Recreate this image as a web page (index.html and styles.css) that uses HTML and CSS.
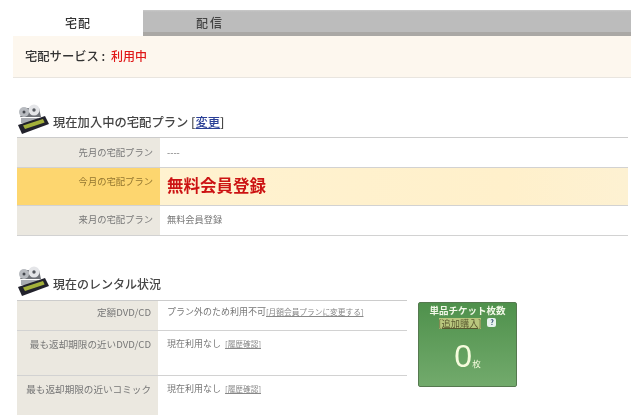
FILE: index.html
```html
<!DOCTYPE html>
<html lang="ja">
<head>
<meta charset="utf-8">
<title>宅配</title>
<link rel="stylesheet" href="styles.css">
</head>
<body>
<svg class="defs" width="0" height="0">
  <defs>
    <g id="filmicon">
      <path d="M3 13 8 4h14l2 9z" fill="#6f7278"/>
      <circle cx="7" cy="8" r="5" fill="#b8bbc0"/>
      <circle cx="17" cy="6" r="5.5" fill="#e4e5e8"/>
      <circle cx="17" cy="6" r="1.7" fill="#55585e"/>
      <circle cx="7" cy="8" r="1.5" fill="#44474d"/>
      <path d="M4 14h17v5H4z" fill="#a8abb1"/>
      <path d="M1 21 28 12l4 8L5 30z" fill="#22222c"/>
      <path d="M6 21.5 26 15l1.6 3.5L8 25z" fill="#a3b03a"/>
    </g>
  </defs>
</svg>
<div class="page">
  <div class="tabs">
    <div class="tab tab-on">宅配</div>
    <div class="tab tab-off">配信</div>
  </div>
  <div class="notice">宅配サービス : <span class="red">利用中</span></div>

  <div class="head head-plan">
    <svg class="film" viewBox="0 0 36 30"><use href="#filmicon"/></svg>
    <span class="head-text">現在加入中の宅配プラン [<a class="link-blue">変更</a>]</span>
  </div>
  <div class="plan">
    <div class="row r30">
      <div class="th">先月の宅配プラン</div><div class="td">----</div>
    </div>
    <div class="row row-now">
      <div class="th">今月の宅配プラン</div><div class="td big">無料会員登録</div>
    </div>
    <div class="row r30 row-last">
      <div class="th">来月の宅配プラン</div><div class="td">無料会員登録</div>
    </div>
  </div>

  <div class="head head-rent">
    <svg class="film" viewBox="0 0 36 30"><use href="#filmicon"/></svg>
    <span class="head-text">現在のレンタル状況</span>
  </div>
  <div class="rental">
    <div class="rent-table">
      <div class="row r30">
        <div class="th">定額DVD/CD</div>
        <div class="td">プラン外のため利用不可<a class="tiny">[月額会員プランに変更する]</a></div>
      </div>
      <div class="row r45">
        <div class="th">最も返却期限の近いDVD/CD</div>
        <div class="td">現在利用なし <a class="tiny tiny-gap">[履歴確認]</a></div>
      </div>
      <div class="row r45 row-end">
        <div class="th">最も返却期限の近いコミック</div>
        <div class="td">現在利用なし <a class="tiny tiny-gap">[履歴確認]</a></div>
      </div>
    </div>
    <div class="ticket">
      <div class="t-title">単品チケット枚数</div>
      <div class="t-buy"><span class="t-link">[追加購入]</span><span class="t-q">?</span></div>
      <div class="t-count"><span class="t-zero">0</span><span class="t-unit">枚</span></div>
    </div>
  </div>
</div>
</body>
</html>
```
FILE: styles.css
```css
html, body { margin: 0; padding: 0; background: #fff; }
body { width: 640px; height: 415px; overflow: hidden; font-family: "Noto Sans CJK JP", "Liberation Sans", sans-serif; color: #666; }
.defs { position: absolute; }
.page { padding: 10px 9px 0 13px; height: 405px; box-sizing: content-box; overflow: hidden; filter: blur(0.45px); }
.tabs { display: flex; height: 26px; }
.tab { display: flex; align-items: center; justify-content: center; font-size: 12px; color: #333; font-weight: 500; letter-spacing: 1px; box-sizing: border-box; }
.tab-on { width: 130px; background: #fff; padding-bottom: 1px; }
.tab-off { flex: 1; background: linear-gradient(#c9c9c9 0, #bcbcbc 2px, #bcbcbc 22px, #aaa8a5 22px); justify-content: flex-start; padding-left: 53px; padding-bottom: 2px; color: #444; letter-spacing: 2px; }
.notice { height: 42px; background: #fdf7ee; border-bottom: 1px solid #e9e5df; box-sizing: border-box; padding: 0 0 2px 12px; display: flex; align-items: center; font-size: 12.3px; color: #333; font-weight: 500; white-space: pre; }
.red { color: #e01818; font-size: 12px; margin-left: 3px; }
.head { display: flex; align-items: flex-start; margin-left: 4px; font-size: 12px; color: #444; font-weight: 500; }
.head-plan { margin-top: 26px; height: 33px; }
.head-rent { margin-top: 30px; height: 34px; }
.head-text { line-height: 18px; margin-top: 9px; }
.head-plan .head-text { font-size: 12.3px; }
.film { width: 36px; height: 30px; flex: none; }
.link-blue { color: #2a3f96; text-decoration: underline; }
.plan { margin: 0 3px 0 4px; border-top: 1px solid #ccc; }
.row { display: flex; border-bottom: 1px solid #d2d2d2; box-sizing: border-box; }
.r30 { height: 30px; }
.r45 { height: 45px; }
.row-now { height: 38px; background: linear-gradient(90deg, #fff3d2, #fff0cb 80%, #fdf1d2); }
.th { width: 143px; flex: none; box-sizing: border-box; background: #ebe8e0; text-align: right; padding: 7px 7px 0 0; font-size: 9.3px; line-height: 14px; color: #777; white-space: nowrap; }
.td { padding: 7px 0 0 7px; font-size: 9.2px; line-height: 14px; color: #777; white-space: nowrap; }
.row-now .th { background: #fdd66f; color: #92752f; padding-top: 6px; }
.row-last .th, .row-last .td { padding-top: 6px; }
.td.big { font-size: 16.5px; line-height: 22px; font-weight: 700; color: #cc1313; padding-top: 6px; }
.rental { display: flex; margin-left: 4px; align-items: flex-start; }
.rent-table { width: 390px; border-top: 1px solid #ccc; }
.rent-table .th { width: 141px; font-size: 9.6px; padding-top: 4px; }
.rent-table .row-end { border-bottom: 0; }
.rent-table .row-end .th { height: 60px; }
.rent-table .td { padding: 4px 0 0 9px; font-size: 9px; }
.rent-table .r45 .td, .rent-table .r45 .th { padding-top: 6px; }
.tiny { font-size: 7.7px; text-decoration: underline; color: #888; }
.tiny-gap { margin-left: 2px; }
.ticket { margin: 2px 0 0 11px; width: 99px; height: 85px; box-sizing: border-box; background: linear-gradient(#4f914c, #72aa6c); border: 1px solid #55794f; border-radius: 2px; text-align: center; color: #fff; }
.t-title { font-size: 9.5px; line-height: 11px; margin-top: 2px; font-weight: 700; color: #f2f8e8; white-space: nowrap; }
.t-buy { display: flex; justify-content: center; align-items: center; gap: 6px; height: 13px; margin-top: 1px; }
.t-link { font-size: 9.2px; color: #5a5a30; background: #b9c77e; text-decoration: underline; line-height: 11px; }
.t-q { width: 9px; height: 9px; border-radius: 2px; background: #e8f3ee; color: #24406a; font-size: 7px; line-height: 9px; font-weight: 700; margin-top: -3px; }
.t-count { margin-top: 7px; display: flex; justify-content: center; align-items: baseline; color: #f5fbdc; }
.t-zero { font-size: 32px; line-height: 38px; font-family: "Liberation Sans", sans-serif; }
.t-unit { font-size: 8.5px; }
```
